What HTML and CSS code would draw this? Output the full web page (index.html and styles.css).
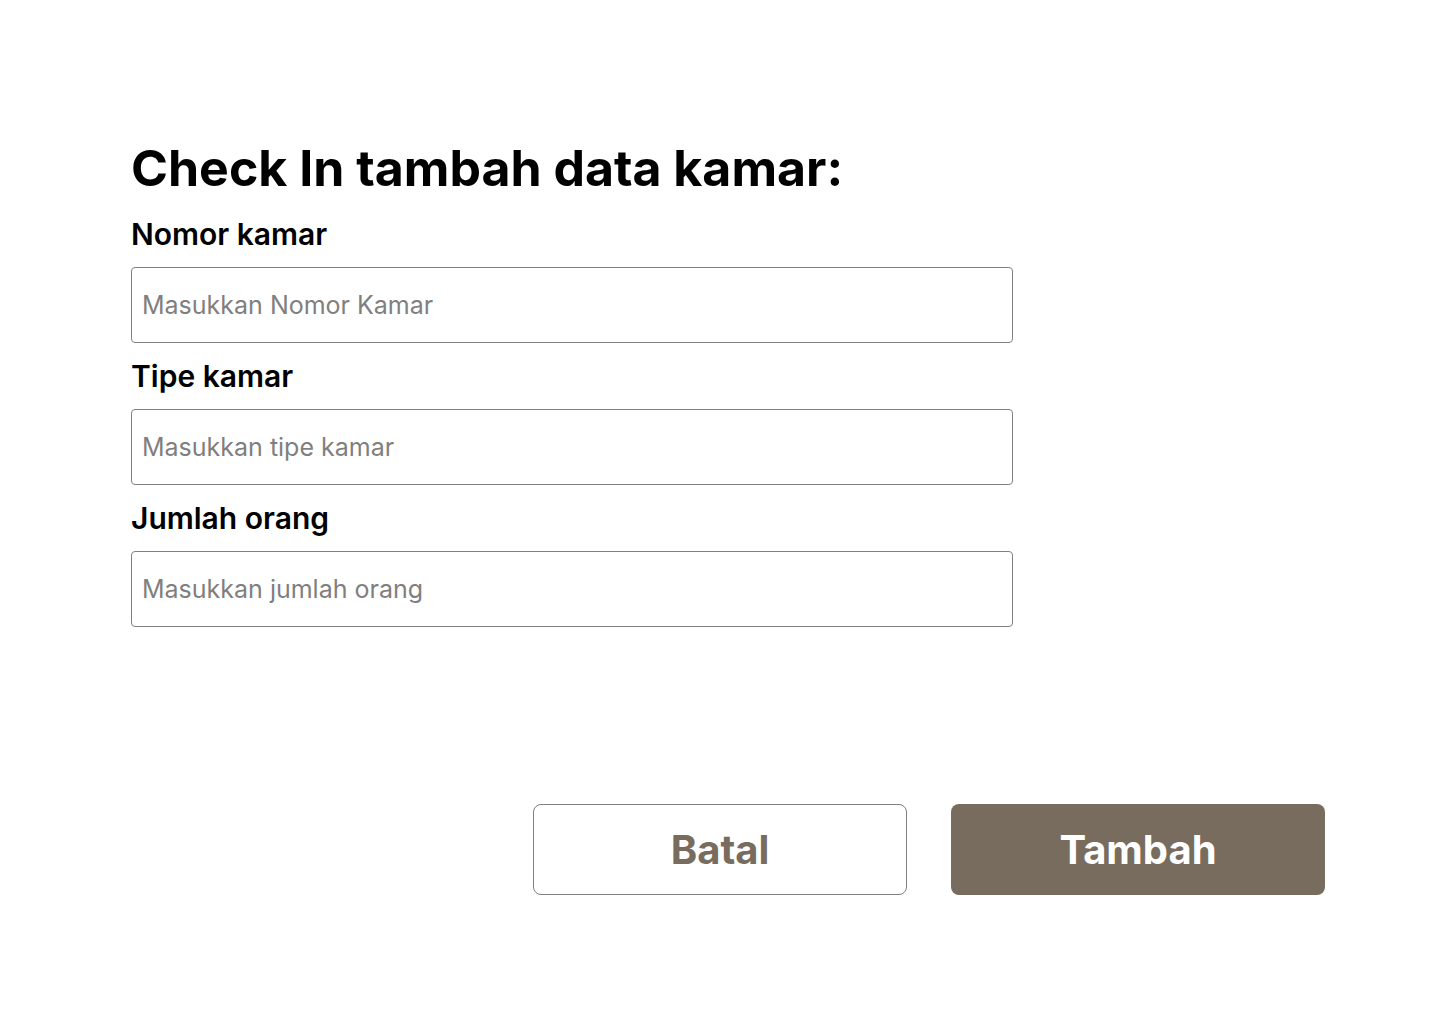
FILE: index.html
```html
<!DOCTYPE html>
<html lang="id">
  <head>
    <meta charset="UTF-8" />
    <meta name="viewport" content="width=device-width, initial-scale=1.0" />
    <title>Check In</title>
    <link rel="stylesheet" href="styles.css">
  </head>
  <body>
    <div class="page">
      <h1 class="title">Check In tambah data kamar:</h1>
      <form class="form" onsubmit="return false">
        <div class="field">
          <label class="label" for="nomor">Nomor kamar</label>
          <input class="input" type="text" id="nomor" placeholder="Masukkan Nomor Kamar" />
        </div>
        <div class="field">
          <label class="label" for="tipe">Tipe kamar</label>
          <input class="input" type="text" id="tipe" placeholder="Masukkan tipe kamar" />
        </div>
        <div class="field">
          <label class="label" for="jumlah">Jumlah orang</label>
          <input class="input" type="text" id="jumlah" placeholder="Masukkan jumlah orang" />
        </div>
        <div class="actions">
          <button type="button" class="btn btn-outline">Batal</button>
          <button type="submit" class="btn btn-primary">Tambah</button>
        </div>
      </form>
    </div>
  </body>
</html>
```

FILE: styles.css
```css
body {
  margin: 0;
  background: #fff;
  font-family: Inter, "Noto Sans", sans-serif;
  color: #000;
}
.page {
  padding: 140px 0 0 131px;
}
.title {
  margin: 0;
  font-size: 50px;
  font-weight: 700;
  line-height: 56px;
}
.form {
  margin-top: 20px;
}
.field {
  display: flex;
  flex-direction: column;
  width: 882px;
  margin-bottom: 15px;
}
.label {
  font-size: 30px;
  font-weight: 600;
  line-height: 36px;
  margin-bottom: 15px;
}
.input {
  box-sizing: border-box;
  height: 76px;
  border: 1px solid #808080;
  border-radius: 4px;
  padding: 0 10px;
  font-family: inherit;
  font-size: 25px;
  color: #000;
}
.input::placeholder {
  color: #7f7f7f;
}
.actions {
  display: flex;
  justify-content: flex-end;
  gap: 44px;
  width: 1194px;
  margin-top: 177px;
}
.btn {
  box-sizing: border-box;
  width: 374px;
  height: 91px;
  border-radius: 8px;
  font-family: inherit;
  font-size: 40px;
  font-weight: 700;
  cursor: pointer;
}
.btn-outline {
  background: #fff;
  border: 1px solid #808080;
  color: #786c5e;
}
.btn-primary {
  background: #786c5e;
  border: none;
  color: #fff;
}
```
